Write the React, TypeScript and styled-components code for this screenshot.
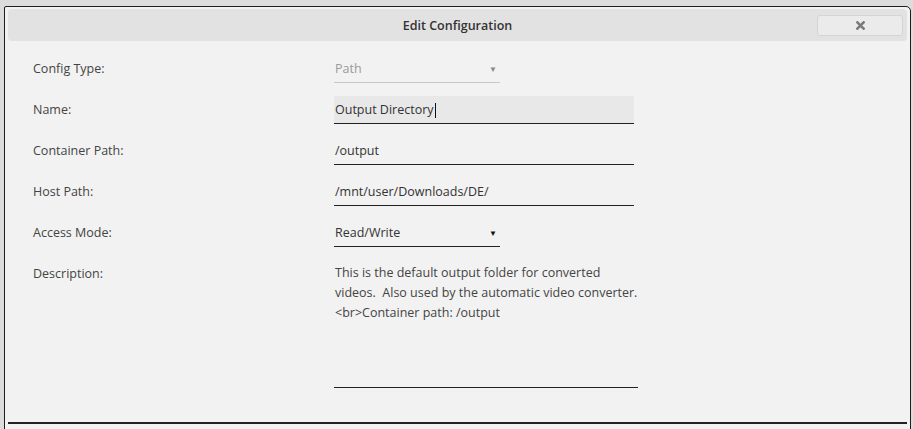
import styled, { createGlobalStyle } from 'styled-components'

const GlobalStyle = createGlobalStyle`
    html, body {
        margin: 0;
        padding: 0;
        background: #dcdcdc;
        overflow: hidden;
    }
    body {
        font-family: "Open Sans", "Noto Sans", sans-serif;
        color: #444;
    }
`

const Page = styled.div`
    height: 429px;
    padding: 6px 2px 0 4px;
    box-sizing: border-box;
`

const Dialog = styled.div`
    height: 440px;
    background: #f2f2f2;
    border: 1px solid #1e1e1e;
    border-radius: 2px 5px 0 0;
    padding: 2px 3px 0;
    box-sizing: border-box;
`

const TitleBar = styled.div`
    position: relative;
    height: 32px;
    background: #e2e2e2;
    border-radius: 4px;
    display: flex;
    align-items: center;
    justify-content: center;
`

const Title = styled.span`
    font-size: 12.5px;
    font-weight: 600;
    color: #333;
`

// close button floats over the right end of the title bar
const CloseButton = styled.button`
    position: absolute;
    right: 4px;
    top: 6px;
    width: 86px;
    height: 21px;
    padding: 0;
    background: #ebebeb;
    border: 1px solid #d4d4d4;
    border-radius: 3px;
    display: flex;
    align-items: center;
    justify-content: center;
    cursor: pointer;
`

const Form = styled.div`
    display: grid;
    grid-template-columns: 301px 1fr;
    row-gap: 13px;
    padding: 14px 0 0 25px;
`

const Label = styled.div`
    font-size: 12.5px;
    line-height: 28px;
    color: #444;
`

const Field = styled.div<{ $width?: number; $filled?: boolean; $muted?: boolean }>`
    width: ${p => p.$width ?? 300}px;
    height: 28px;
    box-sizing: border-box;
    display: flex;
    align-items: center;
    justify-content: space-between;
    padding: 0 0 0 1px;
    font-size: 12.5px;
    color: ${p => (p.$muted ? '#9a9a9a' : '#333')};
    background: ${p => (p.$filled ? '#e8e8e8' : 'transparent')};
    border-bottom: 1px solid ${p => (p.$muted ? '#c8c8c8' : '#222')};
`

const Caret = styled.span`
    display: inline-block;
    width: 1px;
    height: 15px;
    background: #111;
    vertical-align: middle;
    margin-left: 1px;
`

const Arrow = styled.span<{ $muted?: boolean }>`
    font-size: 8px;
    margin-right: 3px;
    color: ${p => (p.$muted ? '#888' : '#111')};
`

const TextArea = styled.div`
    width: 304px;
    height: 128px;
    box-sizing: border-box;
    padding: 3px 0 0 1px;
    font-size: 12.5px;
    line-height: 20px;
    color: #444;
    border-bottom: 1px solid #222;
`

const Footer = styled.div`
    margin: 34px 0 0 0;
    border-top: 2px solid #222;
`

function CloseIcon() {
    return (
        <svg width="9" height="9" viewBox="0 0 10 10">
            <path d="M1.5 1.5 L8.5 8.5 M8.5 1.5 L1.5 8.5" stroke="#7a7a7a" strokeWidth="2.8" strokeLinecap="square" />
        </svg>
    )
}

export default function App() {
    return (
        <>
            <GlobalStyle />
            <Page>
                <Dialog>
                    <TitleBar>
                        <Title>Edit Configuration</Title>
                        <CloseButton>
                            <CloseIcon />
                        </CloseButton>
                    </TitleBar>

                    <Form>
                        <Label>Config Type:</Label>
                        <Field $width={166} $muted>
                            <span>Path</span>
                            <Arrow $muted>▼</Arrow>
                        </Field>

                        <Label>Name:</Label>
                        <Field $filled>
                            <span>Output Directory<Caret /></span>
                        </Field>

                        <Label>Container Path:</Label>
                        <Field>/output</Field>

                        <Label>Host Path:</Label>
                        <Field>/mnt/user/Downloads/DE/</Field>

                        <Label>Access Mode:</Label>
                        <Field $width={166}>
                            <span>Read/Write</span>
                            <Arrow>▼</Arrow>
                        </Field>

                        <Label>Description:</Label>
                        <TextArea>
                            This is the default output folder for converted<br />
                            videos.&nbsp; Also used by the automatic video converter.<br />
                            &lt;br&gt;Container path: /output
                        </TextArea>
                    </Form>

                    <Footer />
                </Dialog>
            </Page>
        </>
    )
}
